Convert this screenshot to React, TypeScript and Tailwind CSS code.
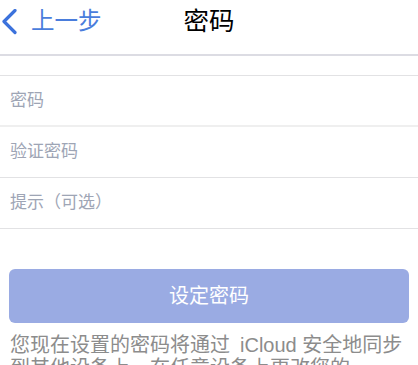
import React from "react";

const font = { fontFamily: '"Liberation Sans", "Noto Sans CJK SC", "Noto Sans", sans-serif' };

export default function App() {
  return (
    <div className="w-[418px] h-[365px] overflow-hidden bg-white" style={font}>
      <div className="h-[56px] border-b-2 border-[#dcdce3] grid grid-cols-[1fr_auto_1fr] items-start pt-[4px]">
        <div className="flex items-center h-[34px]">
          <svg width="20" height="26" viewBox="0 0 20 26" className="ml-[1px] mt-[1px]">
            <path d="M14 1.5 L3 12.5 L14 23.5" fill="none" stroke="#3c72dc" strokeWidth="3.2" strokeLinecap="round" strokeLinejoin="round" />
          </svg>
          <span className="ml-[10px] text-[23.5px] leading-[34px] text-[#4a7ddc]">上一步</span>
        </div>
        <div className="text-[25.5px] leading-[34px] text-black">密码</div>
        <div />
      </div>
      <div className="h-[19px]" />
      <div className="border-t border-[#e2e2e4]">
        {["密码", "验证密码", "提示（可选）"].map((t, i) => (
          <div
            key={t}
            className={`h-[51px] flex items-center px-[10px] text-[17px] text-[#9ea5b5] border-b ${i === 0 ? "border-[#efefef] border-b-2" : "border-[#e2e2e4]"}`}
          >
            {t}
          </div>
        ))}
      </div>
      <div className="h-[40px]" />
      <div className="mx-[9px] h-[54px] rounded-[6px] bg-[#9aabe3] flex items-center justify-center text-white text-[20px]">
        设定密码
      </div>
      <p className="px-[10px] pt-[11px] text-[20px] leading-[23px] text-[#8c8c8c] whitespace-nowrap">
        您现在设置的密码将通过<span className="inline-block w-[10px]" />iCloud 安全地同步
        <br />
        到其他设备上，在任意设备上更改您的
      </p>
    </div>
  );
}
